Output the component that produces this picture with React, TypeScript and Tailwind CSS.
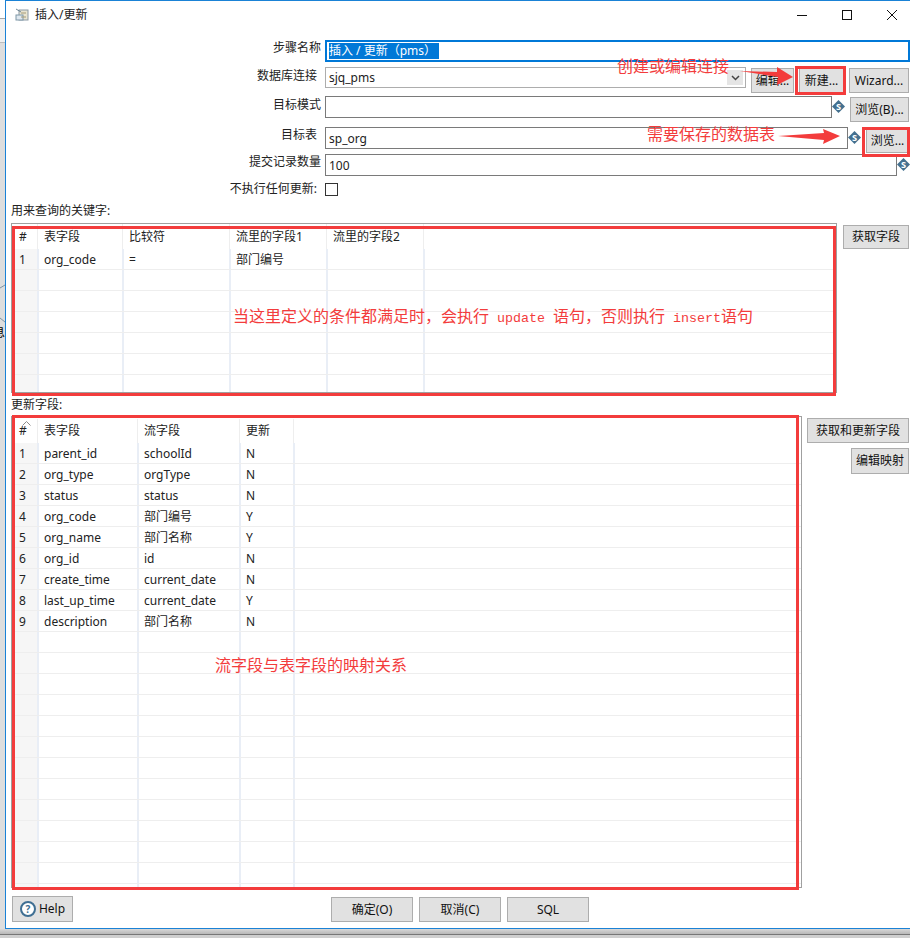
import type { ReactNode } from 'react';

const keyRows = [['1', 'org_code', '=', '部门编号', '', '']];

const updateRows = [
  ['1', 'parent_id', 'schoolId', 'N', ''],
  ['2', 'org_type', 'orgType', 'N', ''],
  ['3', 'status', 'status', 'N', ''],
  ['4', 'org_code', '部门编号', 'Y', ''],
  ['5', 'org_name', '部门名称', 'Y', ''],
  ['6', 'org_id', 'id', 'N', ''],
  ['7', 'create_time', 'current_date', 'N', ''],
  ['8', 'last_up_time', 'current_date', 'Y', ''],
  ['9', 'description', '部门名称', 'N', ''],
];

// Grey Windows-style push button
function Btn({ className = '', children }: { className?: string; children: ReactNode }) {
  return (
    <div className={`flex items-center justify-center border border-[#adadad] bg-[#e1e1e1] text-[#111] ${className}`}>
      {children}
    </div>
  );
}

// The little "$" variable diamond beside text fields
function VarIcon({ className = '' }: { className?: string }) {
  return (
    <svg width="13" height="13" viewBox="0 0 14 14" className={`shrink-0 ${className}`}>
      <polygon points="7,0 14,7 7,14 0,7" fill="#44708f" />
      <text x="7" y="10.5" textAnchor="middle" fontSize="10" fontWeight="700" fill="#fff">S</text>
    </svg>
  );
}

function Label({ className = '', children }: { className?: string; children: ReactNode }) {
  return <div className={`w-[319px] shrink-0 text-right leading-4 ${className}`}>{children}</div>;
}

// One data grid: a header, filled rows, then empty rows up to the bottom edge
function DataGrid({
  cols,
  rowCols,
  headers,
  rows,
  empty,
  headerClass,
  caret,
}: {
  cols: string;
  rowCols: string;
  headers: string[];
  rows: string[][];
  empty: number;
  headerClass: string;
  caret?: boolean;
}) {
  const blank = headers.map(() => '');
  const allRows = [...rows, ...Array.from({ length: empty }, () => blank)];
  return (
    <div className="flex-1 overflow-hidden">
      <div className={`grid ${cols} ${headerClass}`}>
        {headers.map((h, i) => (
          <div key={i} className={`relative flex items-center pl-[6px] border-r border-[#eeeeee] ${i === 0 ? 'pl-[7px]' : ''} ${i === headers.length - 1 ? 'border-r-0' : ''}`}>
            {caret && i === 0 && (
              <svg width="9" height="5" viewBox="0 0 9 5" className="absolute left-[10px] top-[2px]">
                <path d="M0.5 4.5 L4.5 0.5 L8.5 4.5" fill="none" stroke="#8a8a8a" />
              </svg>
            )}
            {h}
          </div>
        ))}
      </div>
      {allRows.map((row, r) => (
        <div key={r} className={`grid ${rowCols} h-[21px] border-b border-[#eeeeee]`}>
          {row.map((cell, i) => (
            <div
              key={i}
              className={`flex items-center pt-[2px] ${i === 0 ? 'bg-[#f6f6f6] border-r-2 border-[#e9eef6] pl-[7px]' : 'pl-[5px]'} ${i > 0 && i < row.length - 1 ? 'border-r-2 border-[#e9eef6]' : ''}`}
            >
              {cell}
            </div>
          ))}
        </div>
      ))}
    </div>
  );
}

export default function App() {
  return (
    <div
      className="relative flex h-[938px] w-[910px] flex-col overflow-hidden bg-[#d4d4d4] text-[12px] text-[#222]"
      style={{ fontFamily: '"Noto Sans", "Noto Sans CJK SC", sans-serif' }}
    >
      <div className="flex h-[929px]">
        {/* Sliver of the application behind the dialog */}
        <div className="relative flex w-[5px] shrink-0 flex-col overflow-hidden">
          <div className="h-[19px] border-b border-[#a8a8a8] bg-white"></div>
          <div className="h-[24px] border-b border-[#bdbdbd] bg-[#f0f0f0]"></div>
          <div className="flex-1 bg-[#dedede]"></div>
          <svg width="5" height="40" viewBox="0 0 5 40" className="absolute left-0 top-[284px]">
            <path d="M0 4 L5 1 M0 34 L5 38" stroke="#7f93a3" fill="none" />
          </svg>
          <div className="absolute left-[-7px] top-[325px] leading-4 text-black">息</div>
        </div>

        {/* Dialog window */}
        <div className="flex flex-1 flex-col border-b border-l border-t border-[#1a82d6] bg-white">
          {/* Title bar */}
          <div className="flex h-[39px] shrink-0 items-start">
            <svg width="14" height="14" viewBox="0 0 14 14" className="ml-[9px] mt-[7px]">
              <rect x="4" y="2" width="9" height="10" fill="#e9e4d0" stroke="#8b9aa5" />
              <rect x="1" y="7" width="7" height="5" fill="#dfe8ef" stroke="#7f97a8" />
              <path d="M1 1 L6 4" stroke="#6f8797" fill="none" />
              <path d="M6 5 H11 M6 9 H11" stroke="#a39a78" />
            </svg>
            <div className="ml-[6px] mt-[6px] leading-4">插入/更新</div>
            <div className="flex-1"></div>
            <svg width="110" height="20" viewBox="0 0 110 20" className="mr-[3px] mt-[5px]">
              <path d="M0 9.5 H10" stroke="#111" />
              <rect x="45.5" y="4.5" width="9" height="9" fill="none" stroke="#111" />
              <path d="M90 4 L100 14 M100 4 L90 14" stroke="#111" />
            </svg>
          </div>

          {/* Form fields */}
          <div className="flex h-[22px] shrink-0 items-start">
            <Label className="pr-[4px]">步骤名称</Label>
            <div className="ml-0 flex h-[22px] flex-1 items-center border-2 border-[#0078d7] pl-[2px]">
              <span className="bg-[#0078d7] pr-[3px] leading-4 text-white">插入 / 更新（pms）</span>
            </div>
          </div>

          <div className="mt-[5px] flex h-[26px] shrink-0 items-start">
            <Label className="pr-[8px] pt-px">数据库连接</Label>
            <div className="flex h-[21px] w-[421px] items-center justify-between border border-[#adadad] pl-[3px] pr-px">
              sjq_pms
              <div className="mr-px flex h-[15px] w-[16px] items-center justify-center bg-[#e5e5e5]">
                <svg width="9" height="6" viewBox="0 0 9 6">
                  <path d="M1 1 L4.5 4.5 L8 1" fill="none" stroke="#444" strokeWidth="1.5" />
                </svg>
              </div>
            </div>
            <Btn className="ml-[5px] mt-px h-[25px] w-[43px]">编辑...</Btn>
            <Btn className="ml-[5px] mt-px h-[25px] w-[45px]">新建...</Btn>
            <Btn className="ml-[5px] mt-px h-[25px] w-[60px]">Wizard...</Btn>
          </div>

          <div className="mt-[3px] flex h-[26px] shrink-0 items-start">
            <Label className="pr-[4px] pt-px">目标模式</Label>
            <div className="h-[22px] w-[507px] border border-[#7a7a7a]"></div>
            <VarIcon className="mt-[4px]" />
            <Btn className="ml-[5px] mt-px h-[25px] w-[59px]">浏览(B)...</Btn>
          </div>

          <div className="mt-[5px] flex h-[27px] shrink-0 items-start">
            <Label className="pr-[8px]">目标表</Label>
            <div className="flex h-[22px] w-[523px] items-center border border-[#7a7a7a] pl-[3px] pt-[2px]">sp_org</div>
            <VarIcon className="mt-[4px]" />
            <Btn className="ml-[5px] mt-[2px] h-[24px] w-[43px]">浏览...</Btn>
          </div>

          <div className="flex h-[22px] shrink-0 items-start">
            <Label className="pr-[4px]">提交记录数量</Label>
            <div className="flex h-[22px] w-[572px] items-center border border-[#7a7a7a] pl-[3px] pt-[2px]">100</div>
            <VarIcon className="mt-[4px]" />
          </div>

          <div className="mt-[5px] flex h-[16px] shrink-0 items-start">
            <Label className="pr-[8px]">不执行任何更新:</Label>
            <div className="mt-[2px] h-[13px] w-[13px] border border-[#333]"></div>
          </div>

          {/* Key lookup section */}
          <div className="ml-[5px] mt-[5px] h-[16px] shrink-0 pt-px leading-4">用来查询的关键字:</div>
          <div className="ml-[5px] mt-[5px] flex h-[170px] shrink-0 items-start">
            <div className="flex h-[170px] w-[826px] border border-[#a0a0a0]">
              <DataGrid
                cols="grid-cols-[26px_85px_107px_97px_97px_1fr]"
                rowCols="grid-cols-[27px_85px_107px_97px_97px_1fr]"
                headers={['#', '表字段', '比较符', '流里的字段1', '流里的字段2', '']}
                rows={keyRows}
                empty={6}
                headerClass="h-[25px]"
              />
            </div>
            <Btn className="ml-[6px] mt-[2px] h-[24px] w-[66px]">获取字段</Btn>
          </div>

          {/* Update fields section */}
          <div className="ml-[5px] mt-[3px] h-[16px] shrink-0 pt-px leading-4">更新字段:</div>
          <div className="ml-[5px] mt-[4px] flex h-[472px] shrink-0 items-start">
            <div className="flex h-[472px] w-[791px] border border-[#a0a0a0]">
              <DataGrid
                cols="grid-cols-[26px_100px_102px_54px_1fr]"
                rowCols="grid-cols-[27px_100px_102px_54px_1fr]"
                headers={['#', '表字段', '流字段', '更新', '']}
                rows={updateRows}
                empty={13}
                headerClass="h-[26px] pt-[2px]"
                caret
              />
            </div>
            <div className="ml-[5px] mt-[2px] flex w-[102px] flex-col items-end gap-[5px]">
              <Btn className="h-[25px] w-[102px]">获取和更新字段</Btn>
              <Btn className="h-[26px] w-[58px]">编辑映射</Btn>
            </div>
          </div>

          {/* Dialog buttons */}
          <div className="ml-[6px] mt-[8px] flex shrink-0 items-start">
            <Btn className="h-[26px] w-[61px] gap-[3px]">
              <svg width="16" height="16" viewBox="0 0 16 16">
                <circle cx="8" cy="8" r="7" fill="#fff" stroke="#3f6f93" strokeWidth="2" />
                <text x="8" y="12" textAnchor="middle" fontSize="10" fontWeight="700" fill="#3f6f93">?</text>
              </svg>
              Help
            </Btn>
            <Btn className="ml-[258px] mt-px h-[25px] w-[82px]">确定(O)</Btn>
            <Btn className="ml-[6px] mt-px h-[25px] w-[82px]">取消(C)</Btn>
            <Btn className="ml-[6px] mt-px h-[25px] w-[82px]">SQL</Btn>
          </div>
        </div>
      </div>

      {/* Taskbar-ish strip under the dialog */}
      <div className="h-[5px] shrink-0 bg-gradient-to-b from-[#d8d8d8] to-[#b8b8b8]"></div>
      <div className="h-px shrink-0 bg-[#777]"></div>
      <div className="flex-1 bg-[#cfcfcf]"></div>

      {/* Red annotations drawn over the screenshot */}
      <div className="pointer-events-none absolute left-[795px] top-[66px] h-[29px] w-[51px] border-[3px] border-[#f33c3c]"></div>
      <div className="pointer-events-none absolute left-[862px] top-[127px] h-[30px] w-[48px] border-[3px] border-[#f33c3c]"></div>
      <div className="pointer-events-none absolute left-[12px] top-[226px] h-[170px] w-[824px] border-[3px] border-[#f33c3c]"></div>
      <div className="pointer-events-none absolute left-[12px] top-[415px] h-[475px] w-[787px] border-[3px] border-[#f33c3c]"></div>

      <div className="absolute left-[617px] top-[54px] text-[16px] leading-6 text-[#f33c3c]">创建或编辑连接</div>
      <div className="absolute left-[647px] top-[122px] text-[16px] leading-6 text-[#f33c3c]">需要保存的数据表</div>
      <div className="absolute left-[233px] top-[304px] flex items-baseline whitespace-pre text-[16px] leading-6 text-[#f33c3c]">
        当这里定义的条件都满足时，会执行
        <span className="text-[13.33px]" style={{ fontFamily: '"Liberation Mono", monospace' }}> update </span>
        语句，否则执行
        <span className="text-[13.33px]" style={{ fontFamily: '"Liberation Mono", monospace' }}> insert</span>
        语句
      </div>
      <div className="absolute left-[215px] top-[653px] text-[16px] leading-6 text-[#f33c3c]">流字段与表字段的映射关系</div>

      <svg width="910" height="160" viewBox="0 0 910 160" className="pointer-events-none absolute left-0 top-0">
        <polygon points="740,71 777,72 777,67 793,77 777,85 778,77" fill="#f33c3c" />
        <polygon points="778,136 824,133 823,129 840,136 823,144 824,140" fill="#f33c3c" />
      </svg>
    </div>
  );
}
